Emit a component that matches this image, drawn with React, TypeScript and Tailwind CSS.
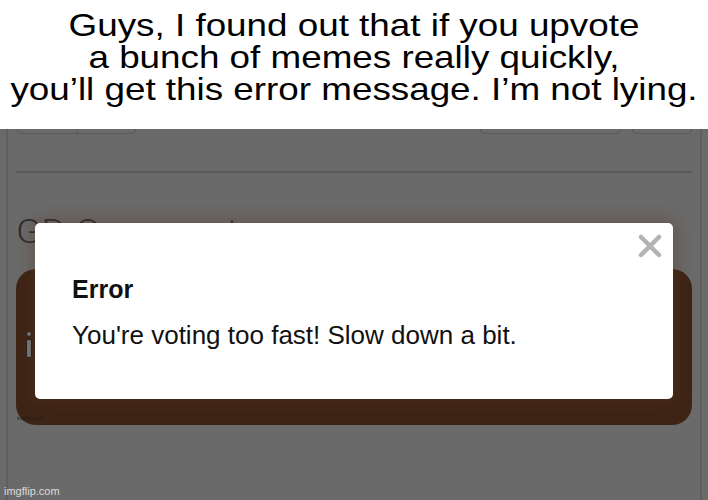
import React from "react";

export default function App() {
  return (
    <div className="relative w-[708px] h-[500px] overflow-hidden flex flex-col font-['Liberation_Sans',Arial,sans-serif] bg-white">
      {/* Caption */}
      <div className="h-[129px] shrink-0 bg-white pt-[9px] text-center text-[32px] leading-[32px] text-black">
        <div className="scale-x-[1.15]">
          Guys, I found out that if you upvote
          <br />
          a bunch of memes really quickly,
          <br />
          you’ll get this error message. I’m not lying.
        </div>
      </div>

      {/* Dimmed page */}
      <div className="flex-1 bg-[#6a6a6a] overflow-hidden">
        <div className="ml-[6px] w-[696px] h-full border-l-2 border-r-2 border-[#5f5f5f] pl-[8px] pr-[8px] flex flex-col">
          {/* buttons row (mostly hidden under caption) */}
          <div className="-mt-[26px] h-[31px] shrink-0 flex justify-between">
            <div className="ml-[1px] w-[119px] h-full flex rounded-[4px] border border-[#5a5a5a]">
              <div className="w-[60px] h-full border-r border-[#5a5a5a]" />
              <div className="flex-1 h-full" />
            </div>
            <div className="flex gap-[11px] h-full">
              <div className="w-[141px] h-full rounded-[4px] border border-[#5a5a5a]" />
              <div className="w-[60px] h-full rounded-[4px] border border-[#5a5a5a]" />
            </div>
          </div>

          <div className="mt-[37px] h-[2px] shrink-0 bg-[#5a5a5a]" />

          <div className="mt-[41px] h-[34px] shrink-0 font-['Roboto',sans-serif] font-light text-[34px] leading-[34px] text-[#2e2e2e] whitespace-nowrap">
            <div className="origin-left scale-x-[1.1]">GD Comments</div>
          </div>

          <div className="mt-[21px] h-[156px] shrink-0 rounded-[20px] bg-[#3e2415] flex flex-col pl-[10px] pt-[62px] pb-[4px]">
            <div className="flex flex-col items-start gap-[2px]">
              <div className="w-[6px] h-[6px] rounded-full bg-[#7a7a7a] border border-[#1e1e1e]" />
              <div className="w-[6px] h-[19px] rounded-[2px] bg-[#7a7a7a] border border-[#1e1e1e]" />
            </div>
            <div className="mt-auto -ml-[9px] text-[5px] leading-[5px] text-[#1a1a1a]">imgflip.com</div>
          </div>
        </div>
      </div>

      {/* Modal */}
      <div className="absolute left-[35px] top-[223px] w-[638px] h-[176px] bg-white rounded-[5px] pl-[37px] pt-[51px] text-[#111] shadow-[0_0_14px_4px_rgba(90,55,35,0.35)]">
        <div className="text-[25px] leading-[30px] font-bold">Error</div>
        <div className="mt-[16px] text-[26px] leading-[30px] whitespace-nowrap">
          You're voting too fast! Slow down a bit.
        </div>
        <div className="absolute top-[11px] right-[11px] w-[24px] h-[24px]">
          <svg width="24" height="24" viewBox="0 0 24 24">
            <path d="M3 3 L21 21 M21 3 L3 21" stroke="#b3b3b3" strokeWidth="4.5" strokeLinecap="round" fill="none" />
          </svg>
        </div>
      </div>

      {/* watermark */}
      <div className="absolute left-[4px] bottom-[3px] text-[11px] leading-[12px] text-[#dcdcdc]">imgflip.com</div>
    </div>
  );
}
